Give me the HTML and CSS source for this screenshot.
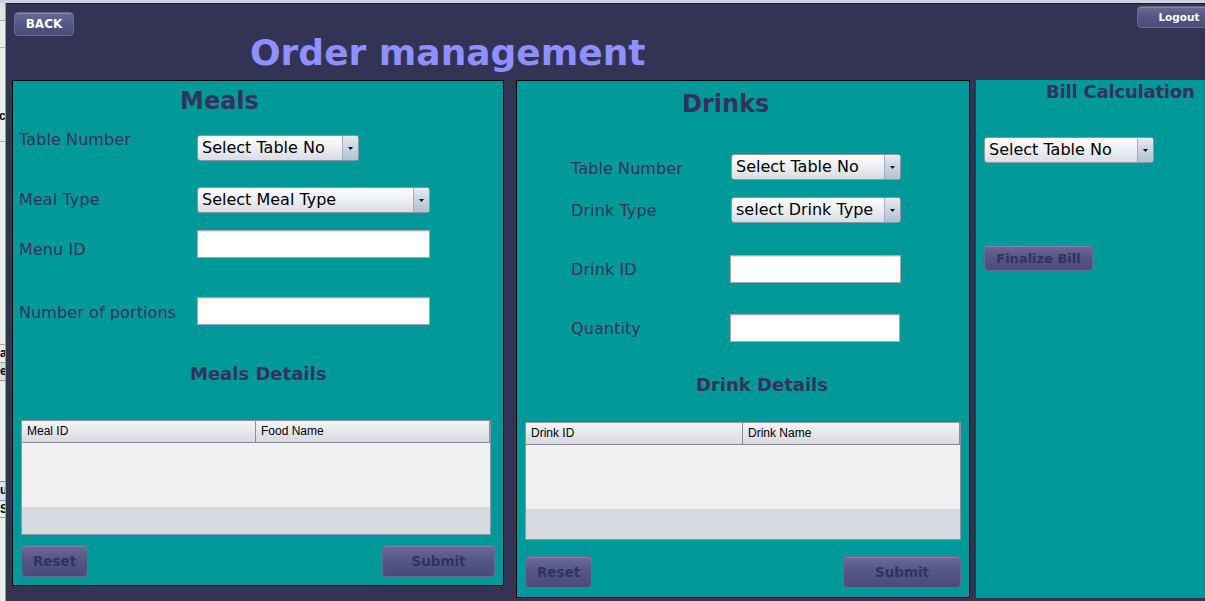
FILE: index.html
```html
<!DOCTYPE html>
<html>
<head>
<meta charset="utf-8">
<title>Order management</title>
<link rel="stylesheet" href="styles.css">
</head>
<body>
<div class="screen">
  <div class="sliver">
    <div class="sl sl-1"></div>
    <div class="sl sl-2"></div>
    <div class="sl sl-3"></div>
    <div class="sl sl-letter sl-c">c</div>
    <div class="sl sl-4"></div>
    <div class="sl sl-5"></div>
    <div class="sl sl-letter sl-a">a</div>
    <div class="sl sl-letter sl-e">e</div>
    <div class="sl sl-6"></div>
    <div class="sl sl-letter sl-u">u</div>
    <div class="sl sl-letter sl-s">S</div>
  </div>
  <div class="app">
    <header class="topbar">
      <button class="btn btn-back">BACK</button>
      <h1 class="title">Order management</h1>
      <button class="btn btn-logout">Logout</button>
    </header>
    <main class="panels">
      <section class="panel meals">
        <h2 class="panel-title meals-title">Meals</h2>
        <div class="form meals-form">
          <div class="row r1">
            <label class="label">Table Number</label>
            <div class="combo ctl w162"><span class="combo-text">Select Table No</span><span class="combo-arrow"><svg width="5" height="3" viewBox="0 0 5 3"><path d="M0 0H5L2.5 3Z" fill="#111"/></svg></span></div>
          </div>
          <div class="row r2">
            <label class="label">Meal Type</label>
            <div class="combo ctl w233"><span class="combo-text">Select Meal Type</span><span class="combo-arrow"><svg width="5" height="3" viewBox="0 0 5 3"><path d="M0 0H5L2.5 3Z" fill="#111"/></svg></span></div>
          </div>
          <div class="row r3">
            <label class="label">Menu ID</label>
            <input class="field ctl w233" type="text">
          </div>
          <div class="row r4">
            <label class="label">Number of portions</label>
            <input class="field ctl w233" type="text">
          </div>
        </div>
        <h3 class="sub-title meals-sub">Meals Details</h3>
        <div class="tbl meals-tbl">
          <div class="thead meals-cols"><div class="th">Meal ID</div><div class="th th-2">Food Name</div></div>
          <div class="tbody"></div>
          <div class="tfill"></div>
        </div>
        <div class="actions meals-actions">
          <button class="btn btn-act btn-reset">Reset</button>
          <button class="btn btn-act btn-submit-m">Submit</button>
        </div>
      </section>

      <section class="panel drinks">
        <h2 class="panel-title drinks-title">Drinks</h2>
        <div class="form drinks-form">
          <div class="row r1">
            <label class="label">Table Number</label>
            <div class="combo ctl w170"><span class="combo-text">Select Table No</span><span class="combo-arrow"><svg width="5" height="3" viewBox="0 0 5 3"><path d="M0 0H5L2.5 3Z" fill="#111"/></svg></span></div>
          </div>
          <div class="row r2">
            <label class="label">Drink Type</label>
            <div class="combo ctl w170"><span class="combo-text">select Drink Type</span><span class="combo-arrow"><svg width="5" height="3" viewBox="0 0 5 3"><path d="M0 0H5L2.5 3Z" fill="#111"/></svg></span></div>
          </div>
          <div class="row r3">
            <label class="label">Drink ID</label>
            <input class="field ctl w171 shift" type="text">
          </div>
          <div class="row r4">
            <label class="label">Quantity</label>
            <input class="field ctl w170 shift" type="text">
          </div>
        </div>
        <h3 class="sub-title drinks-sub">Drink Details</h3>
        <div class="tbl drinks-tbl">
          <div class="thead drinks-cols"><div class="th">Drink ID</div><div class="th th-2">Drink Name</div></div>
          <div class="tbody"></div>
          <div class="tfill"></div>
        </div>
        <div class="actions drinks-actions">
          <button class="btn btn-act btn-reset">Reset</button>
          <button class="btn btn-act btn-submit-d">Submit</button>
        </div>
      </section>

      <section class="panel bill">
        <h3 class="sub-title bill-title">Bill Calculation</h3>
        <div class="combo bill-combo w170"><span class="combo-text">Select Table No</span><span class="combo-arrow"><svg width="5" height="3" viewBox="0 0 5 3"><path d="M0 0H5L2.5 3Z" fill="#111"/></svg></span></div>
        <button class="btn btn-act btn-final">Finalize Bill</button>
      </section>
    </main>
  </div>
</div>
</body>
</html>
```

FILE: styles.css
```css
html, body {
  margin: 0;
  padding: 0;
}

body {
  background: #333355;
  overflow: hidden;
  font-family: "DejaVu Sans", Verdana, sans-serif;
}

.screen {
  display: flex;
  width: 1205px;
  height: 601px;
  box-sizing: border-box;
  border-top: 3px solid #c6d3e1;
  overflow: hidden;
}

/* sliver of another window at the left edge */
.sliver {
  flex: none;
  width: 5px;
  border-right: 1px solid #b48c9c;
  background: #ececec;
  overflow: hidden;
}
.sl { box-sizing: content-box; }
.sl-1 { height: 17px; background: #e2e2e2; border-bottom: 1px solid #a8a8a8; }
.sl-2 { height: 26px; border-bottom: 1px solid #b5b5b5; }
.sl-3 { height: 60px; }
.sl-letter {
  font-family: "Liberation Sans", Arial, sans-serif;
  font-weight: bold;
  font-size: 12px;
  line-height: 16px;
  color: #000;
  white-space: nowrap;
}
.sl-c { height: 16px; text-indent: -1px; }
.sl-4 { height: 17px; border-bottom: 1px solid #aaaaaa; }
.sl-5 { height: 202px; border-bottom: 1px solid #aaaaaa; }
.sl-a { height: 17px; border-bottom: 1px solid #999; }
.sl-e { height: 17px; background: #dcdcdc; border-bottom: 1px solid #999; }
.sl-6 { height: 100px; border-bottom: 1px solid #6a8fc0; }
.sl-u { height: 18px; background: #dde4ee; border-bottom: 1px solid #999; }
.sl-s { height: 16px; border-bottom: 1px solid #999; }

.app {
  flex: 1;
  min-width: 0;
  background: #333355;
  border-top: 1px solid #20203a;
  overflow: hidden;
}

/* header */
.topbar {
  display: flex;
  align-items: flex-start;
  height: 76px;
}

.btn {
  font-family: "DejaVu Sans", Verdana, sans-serif;
  font-weight: bold;
  box-sizing: border-box;
  padding: 0;
  border: 1px solid #6a6a8c;
  border-radius: 4px;
  background: linear-gradient(#6a6a95 0%, #575787 45%, #4b4b7b 100%);
  box-shadow: inset 0 1px 0 rgba(255, 255, 255, 0.18);
  cursor: pointer;
}

.btn-back {
  margin: 8px 0 0 8px;
  width: 60px;
  height: 24px;
  font-size: 12px;
  color: #ffffff;
}

.title {
  margin: 29px 0 0 176px;
  font-size: 36px;
  line-height: 40px;
  font-weight: bold;
  color: #8f8fff;
  white-space: nowrap;
}

.btn-logout {
  margin: 2px -16px 0 auto;
  width: 84px;
  height: 22px;
  font-size: 10.5px;
  color: #ffffff;
  text-align: center;
}

/* panels */
.panels {
  display: flex;
  align-items: flex-start;
  padding-left: 6px;
}

.panel {
  box-sizing: border-box;
  background: #009999;
  border: 1px solid #000;
  flex: none;
}

.meals {
  width: 492px;
  height: 506px;
}

.drinks {
  width: 454px;
  height: 518px;
  margin-left: 12px;
}

.bill {
  flex: 1;
  height: 518px;
  margin-left: 6px;
  border: none;
}

.panel-title {
  margin: 0;
  font-size: 24px;
  line-height: 28px;
  font-weight: bold;
  color: #33335a;
}

.sub-title {
  margin: 0;
  font-size: 18px;
  line-height: 22px;
  font-weight: bold;
  color: #33335a;
  white-space: nowrap;
}

.row {
  display: flex;
  align-items: flex-start;
}

.label {
  flex: none;
  font-size: 16px;
  line-height: 20px;
  letter-spacing: 0.1px;
  color: #33335a;
  white-space: nowrap;
}

/* combo box */
.combo {
  display: flex;
  flex: none;
  height: 26px;
  box-sizing: border-box;
  border: 1px solid #8c96a4;
  border-radius: 3px;
  background: linear-gradient(#fdfdfe 0%, #eef0f3 45%, #d9dce3 100%);
  overflow: hidden;
}
.combo-text {
  flex: 1;
  min-width: 0;
  padding-left: 4px;
  font-size: 16px;
  line-height: 24px;
  color: #000;
  white-space: nowrap;
  overflow: hidden;
}
.combo-arrow {
  flex: none;
  width: 15px;
  border-left: 1px solid #a3afbd;
  background: linear-gradient(#e6ebf2 0%, #c9d4e0 50%, #b3c2d2 100%);
  display: flex;
  align-items: center;
  justify-content: center;
}
.combo-arrow svg { display: block; }

/* text field */
.field {
  flex: none;
  display: block;
  margin: 0;
  padding: 0;
  height: 28px;
  box-sizing: border-box;
  border: 1px solid #a9a9a9;
  background: #ffffff;
  box-shadow: inset 0 1px 0 #e2e2e2;
  outline: none;
}

.w162 { width: 162px; }
.w170 { width: 170px; }
.w171 { width: 171px; }
.w233 { width: 233px; }

/* meals layout */
.meals-title { margin-top: 6px; padding-left: 167px; }
.meals-form { padding-left: 6px; }
.meals .label { width: 178px; }
.meals .r1 { margin-top: 15px; }
.meals .r1 .ctl { margin-top: 5px; }
.meals .r2 { margin-top: 26px; }
.meals .r2 .label { margin-top: 3px; }
.meals .r3 { margin-top: 17px; }
.meals .r3 .label { margin-top: 10px; }
.meals .r4 { margin-top: 37px; }
.meals .r4 .label { margin-top: 6px; }
.meals-sub { margin-top: 38px; padding-left: 177px; }

/* table */
.tbl {
  box-sizing: border-box;
  border: 1px solid #8e939c;
  display: flex;
  flex-direction: column;
  background: #d6d9e0;
}
.thead {
  display: grid;
  height: 21px;
  border-bottom: 1px solid #858a96;
  background: linear-gradient(#f4f4f7 0%, #e6e7ec 50%, #d7d9e0 100%);
  flex: none;
}
.th {
  padding-left: 5px;
  font-family: "Liberation Sans", Arial, sans-serif;
  font-size: 12px;
  line-height: 21px;
  color: #000;
  white-space: nowrap;
}
.th-2 {
  border-left: 1px solid #8a8f9a;
  border-right: 1px solid #8a8f9a;
}
.tbody {
  height: 64px;
  background: #f0f0f0;
  flex: none;
}
.tfill {
  flex: 1;
  background: #d6d9e0;
}

.meals-tbl { margin: 35px 0 0 8px; width: 470px; height: 115px; }
.meals-cols { grid-template-columns: 233px 1fr; }

.actions {
  display: flex;
  justify-content: space-between;
  padding: 0 8px;
}
.btn-act {
  height: 32px;
  font-size: 13.5px;
  color: #33335a;
}
.btn-reset { width: 67px; }
.btn-submit-m { width: 113px; }
.btn-submit-d { width: 118px; }
.meals-actions { margin-top: 10px; }

/* drinks layout */
.drinks-title { margin-top: 9px; padding-left: 165px; }
.drinks-form { padding-left: 54px; }
.drinks .label { width: 160px; }
.drinks .shift { margin-left: -1px; }
.drinks .r1 { margin-top: 36px; }
.drinks .r1 .label { margin-top: 5px; }
.drinks .r2 { margin-top: 17px; }
.drinks .r2 .label { margin-top: 4px; }
.drinks .r3 { margin-top: 32px; }
.drinks .r3 .label { margin-top: 5px; }
.drinks .r4 { margin-top: 31px; }
.drinks .r4 .label { margin-top: 5px; }
.drinks-sub { margin-top: 32px; padding-left: 179px; }
.drinks-tbl { margin: 26px 0 0 8px; width: 436px; height: 118px; }
.drinks-cols { grid-template-columns: 216px 1fr; }
.drinks-actions { margin-top: 16px; }

/* bill layout */
.bill-title { margin-top: 1px; padding-left: 70px; letter-spacing: -0.2px; }
.bill-combo { margin: 34px 0 0 8px; }
.btn-final {
  display: block;
  margin: 82px 0 0 8px;
  width: 109px;
  height: 26px;
  font-size: 13px;
}
```
